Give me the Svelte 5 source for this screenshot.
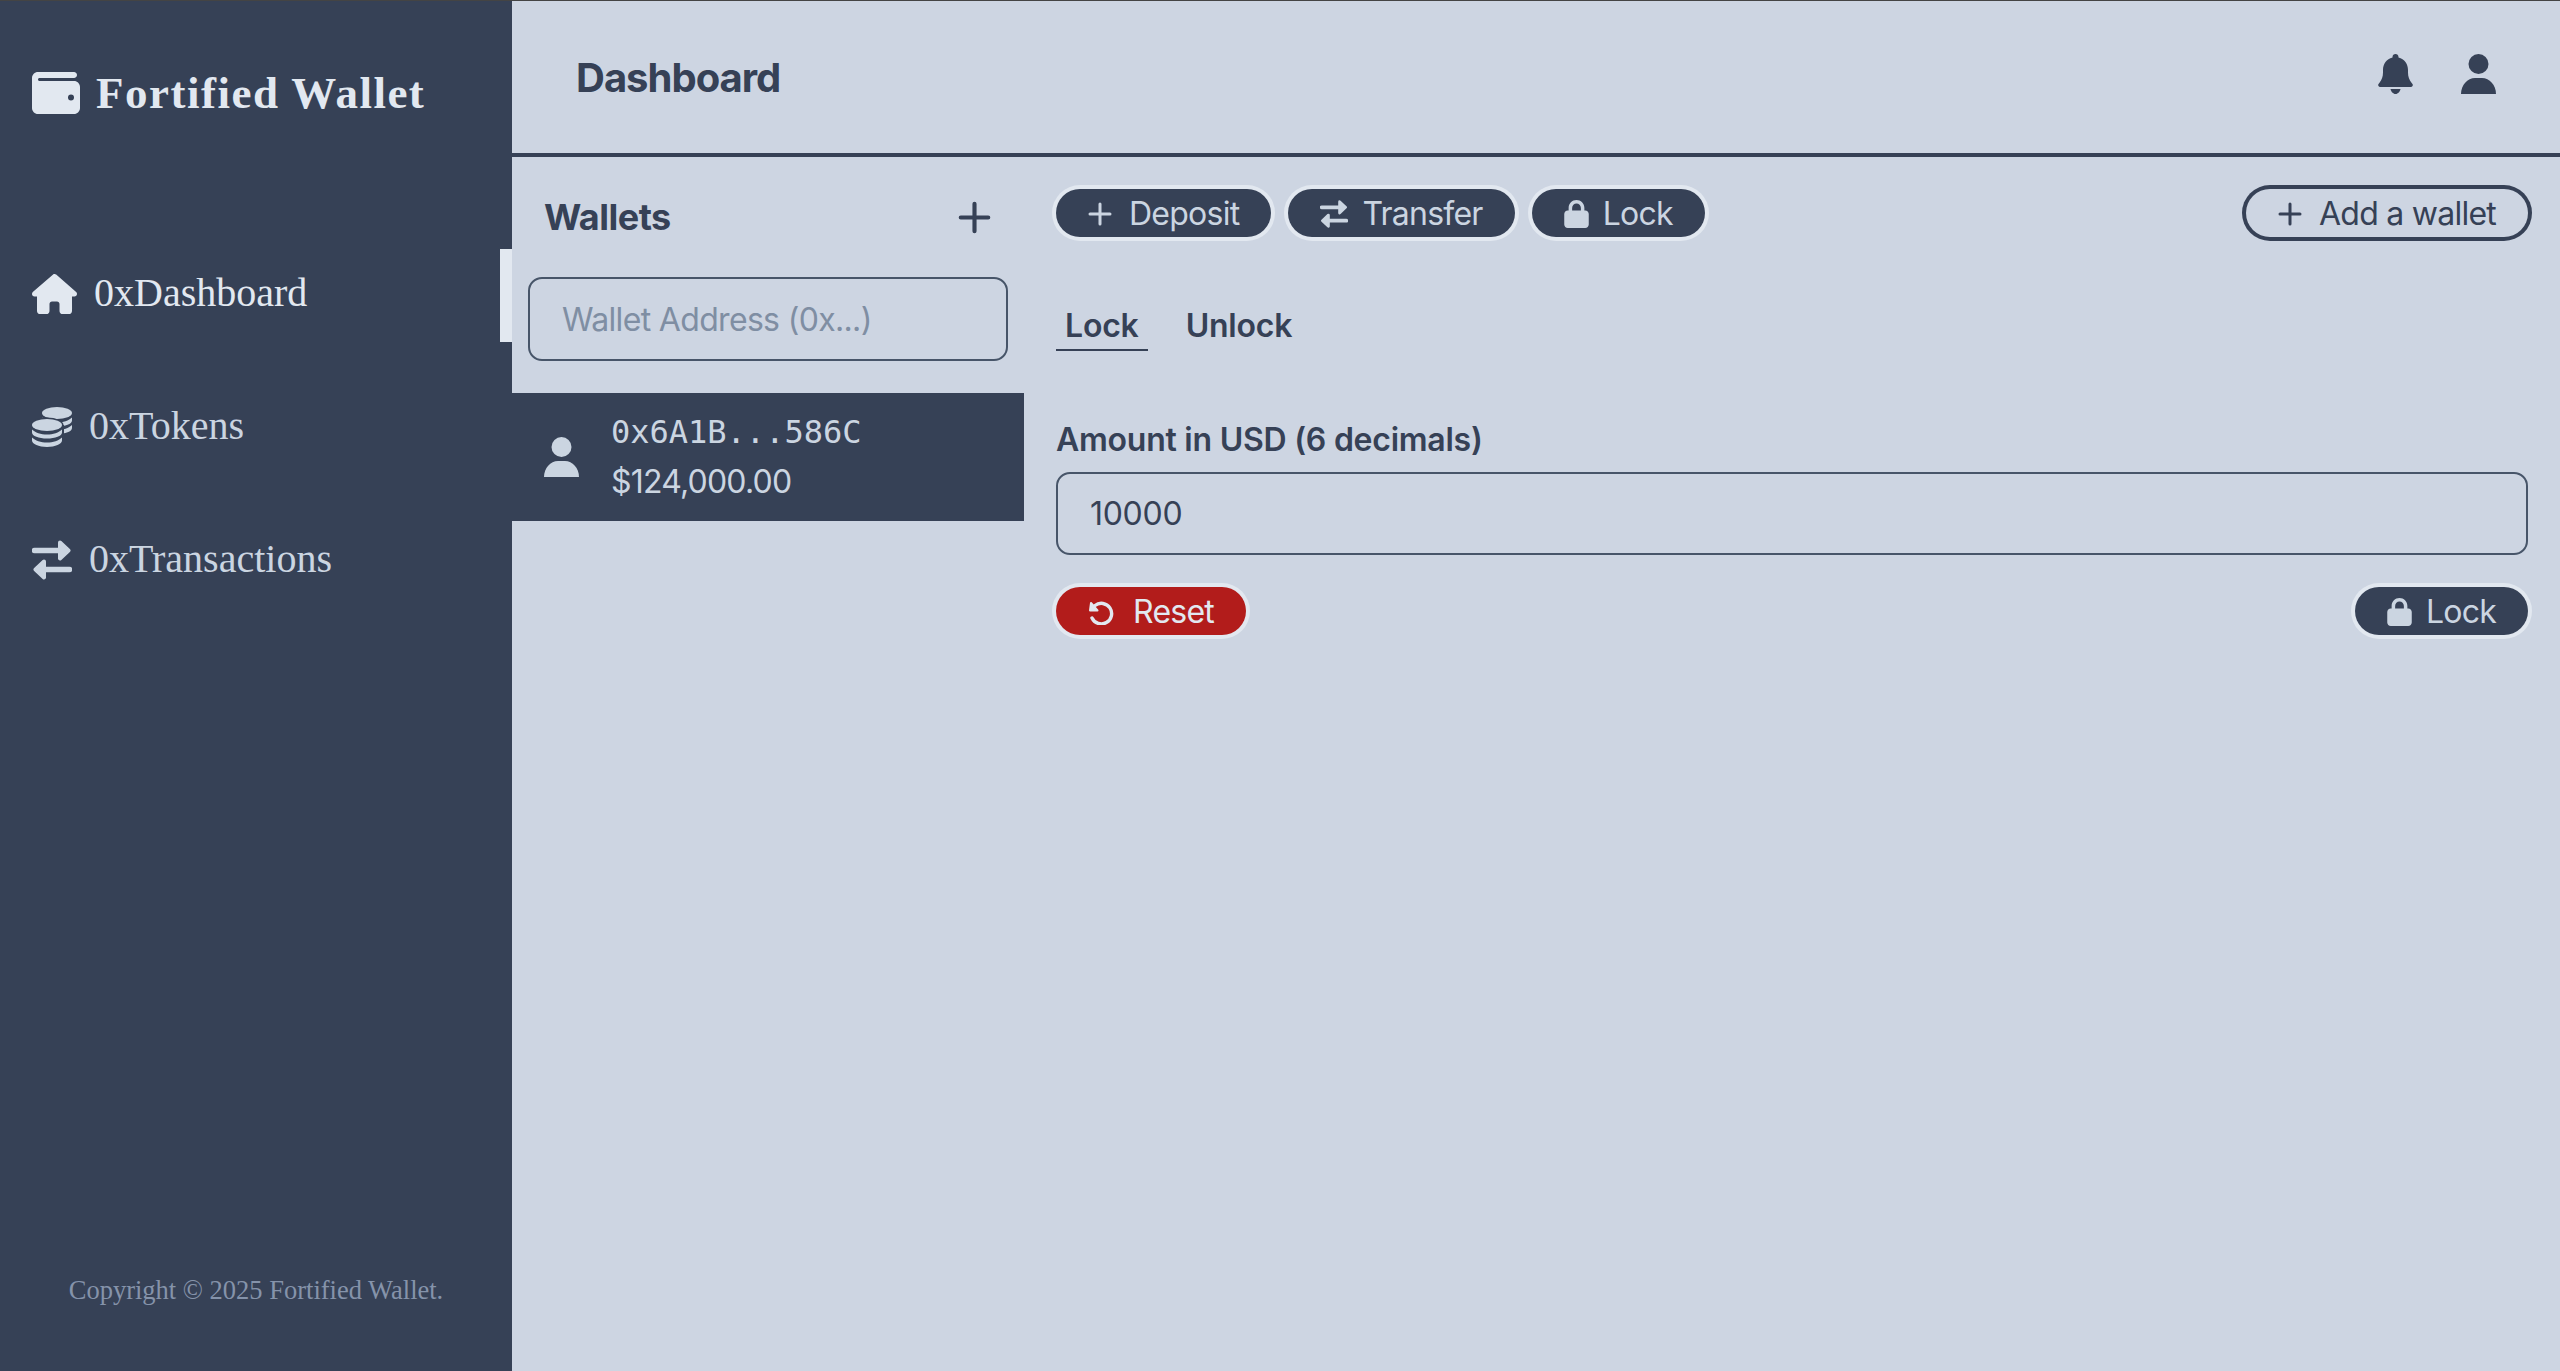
<script lang="ts">
  const nav = [
    { label: '0xDashboard', icon: 'home', active: true },
    { label: '0xTokens', icon: 'coins', active: false },
    { label: '0xTransactions', icon: 'arrows', active: false },
  ];

  let tab = $state('Lock');
  let amount = $state('10000');
  let address = $state('');
</script>

{#snippet plus(size: number)}
  <svg class="ico" width={size} height={size} viewBox="0 0 24 24" fill="none" stroke="currentColor" stroke-width="3" stroke-linecap="round">
    <path d="M12 2v20M2 12h20" />
  </svg>
{/snippet}

{#snippet arrows(size: number)}
  <svg class="ico" width={size} height={size} viewBox="0 0 40 40" fill="currentColor" stroke="currentColor">
    <path d="M2.5 10.5H28M37.5 29.5H12" fill="none" stroke-width="5.5" stroke-linecap="round" />
    <path d="M28 2.5l8.5 8-8.5 8zM12 21.5l-8.5 8 8.5 8z" stroke-width="4" stroke-linejoin="round" />
  </svg>
{/snippet}

{#snippet lock()}
  <svg class="ico" width="25" height="28" viewBox="0 0 448 512" fill="currentColor">
    <path d="M144 144v48H304V144c0-44.2-35.8-80-80-80s-80 35.8-80 80zM80 192V144C80 64.5 144.5 0 224 0s144 64.5 144 144v48h16c35.3 0 64 28.7 64 64V448c0 35.3-28.7 64-64 64H64c-35.3 0-64-28.7-64-64V256c0-35.3 28.7-64 64-64H80z" />
  </svg>
{/snippet}

{#snippet person()}
  <svg class="ico" width="35" height="40" viewBox="0 0 35 40" fill="currentColor">
    <circle cx="17.5" cy="10" r="10" />
    <path d="M0 40c0-9 6.5-16 14-16h7c7.5 0 14 7 14 16z" />
  </svg>
{/snippet}

<div class="app">
  <aside class="sidebar">
    <div class="brand">
      <svg class="ico" width="48" height="42" viewBox="0 32 512 448" fill="currentColor">
        <path d="M64 32C28.7 32 0 60.7 0 96V416c0 35.3 28.7 64 64 64H448c35.3 0 64-28.7 64-64V192c0-35.3-28.7-64-64-64H80c-8.8 0-16-7.2-16-16s7.2-16 16-16H448c17.7 0 32-14.3 32-32s-14.3-32-32-32H64zM416 272a32 32 0 1 1 0 64 32 32 0 1 1 0-64z" />
      </svg>
      <span>Fortified Wallet</span>
    </div>

    <nav class="nav">
      {#each nav as item}
        <div class="nav-item" class:active={item.active}>
          <div class="nav-icon">
            {#if item.icon === 'home'}
              <svg class="ico" width="45" height="40" viewBox="0 0 576 512" fill="currentColor">
                <path d="M575.8 255.5c0 18-15 32.1-32 32.1h-32l.7 160.2c0 2.7-.2 5.4-.5 8.1V472c0 22.1-17.9 40-40 40H456c-1.1 0-2.2 0-3.3-.1c-1.4 .1-2.8 .1-4.2 .1H416 392c-22.1 0-40-17.9-40-40V448 384c0-17.7-14.3-32-32-32H256c-17.7 0-32 14.3-32 32v64 24c0 22.1-17.9 40-40 40H160 128.1c-1.5 0-3-.1-4.5-.2c-1.2 .1-2.4 .2-3.6 .2H104c-22.1 0-40-17.9-40-40V360c0-.9 0-1.9 .1-2.8V287.6H32c-18 0-32-14-32-32.1c0-9 3-17 10-24L266.4 8c7-7 15-8 22-8s15 2 21 7L564.8 231.5c8 7 12 15 11 24z" />
              </svg>
            {:else if item.icon === 'coins'}
              <svg class="ico" width="40" height="40" viewBox="0 0 40 40" fill="currentColor">
                <ellipse cx="25" cy="6" rx="15" ry="6" />
                <path d="M10 10.5v3c0 3.5 6.7 6 15 6s15-2.5 15-6v-3c-3 3-9 5-15 5s-12-2-15-5z" />
                <path d="M10 18v3c0 3.5 6.7 6 15 6s15-2.5 15-6v-3c-3 3-9 5-15 5s-12-2-15-5z" />
                <ellipse cx="15" cy="18" rx="16.5" ry="7.5" fill="#364156" />
                <rect x="-2" y="18" width="34" height="23" fill="#364156" />
                <ellipse cx="15" cy="18" rx="15" ry="6" />
                <path d="M0 22.5v3c0 3.5 6.7 6 15 6s15-2.5 15-6v-3c-3 3-9 5-15 5s-12-2-15-5z" />
                <path d="M0 30.5v3c0 3.5 6.7 6.5 15 6.5s15-3 15-6.5v-3c-3 3-9 5-15 5s-12-2-15-5z" />
              </svg>
            {:else}
              {@render arrows(40)}
            {/if}
          </div>
          <span>{item.label}</span>
        </div>
      {/each}
    </nav>

    <p class="copyright">Copyright © 2025 Fortified Wallet.</p>
  </aside>

  <main class="main">
    <header class="topbar">
      <h1>Dashboard</h1>
      <div class="topbar-icons">
        <svg class="ico" width="35" height="40" viewBox="0 0 35 40" fill="currentColor">
          <path d="M17.5 0c1.7 0 3 1.3 3 3v.6C26.5 5 30 10 30 16v2.5c0 4 1.2 7.5 3.5 10.3l1 1.2c.8 1.2 0 3-1.5 3H2c-1.5 0-2.3-1.8-1.5-3l1-1.2C3.8 26 5 22.5 5 18.5V16C5 10 8.5 5 14.5 3.6V3c0-1.7 1.3-3 3-3z" />
          <path d="M12.5 35h10c-.5 2.5-2.5 5-5 5s-4.5-2.5-5-5z" />
        </svg>
        {@render person()}
      </div>
    </header>

    <div class="body">
      <section class="wallets">
        <div class="wallets-head">
          <h2>Wallets</h2>
          {@render plus(33)}
        </div>
        <input class="field wallet-field" type="text" placeholder="Wallet Address (0x...)" bind:value={address} />
        <div class="wallet-row">
          {@render person()}
          <div class="wallet-meta">
            <span class="addr">0x6A1B...586C</span>
            <span>$124,000.00</span>
          </div>
        </div>
      </section>

      <section class="content">
        <div class="toolbar">
          <button class="btn">{@render plus(24)}Deposit</button>
          <button class="btn btn-tight">{@render arrows(28)}Transfer</button>
          <button class="btn btn-tight">{@render lock()}Lock</button>
          <button class="btn btn-outline">{@render plus(24)}Add a wallet</button>
        </div>

        <div class="tabs">
          {#each ['Lock', 'Unlock'] as t}
            <button class="tab" class:selected={tab === t} onclick={() => (tab = t)}>{t}</button>
          {/each}
        </div>

        <label class="label" for="amount">Amount in USD (6 decimals)</label>
        <input id="amount" class="field" type="text" bind:value={amount} />

        <div class="actions">
          <button class="btn btn-danger">
            <svg class="ico" width="26" height="25" viewBox="0 0 26 25" fill="none" stroke="currentColor">
              <path d="M7 5.5A10.3 10.3 0 1 1 4 18" stroke-width="3.4" stroke-linecap="round" />
              <path d="M2 10.5h7.5L3 3z" fill="currentColor" stroke-width="2" stroke-linejoin="round" />
            </svg>
            Reset
          </button>
          <button class="btn btn-tight">{@render lock()}Lock</button>
        </div>
      </section>
    </div>
  </main>
</div>

<style>
  :global(body) {
    margin: 0;
    background: #cdd5e2;
  }

  .app {
    display: flex;
    height: 100vh;
    border-top: 1px solid #444;
    box-sizing: border-box;
    color: #364156;
    font-family: Inter, sans-serif;
    font-size: 32px;
    line-height: 48px;
    overflow: hidden;
  }

  .ico {
    display: block;
    flex-shrink: 0;
  }

  /* sidebar */
  .sidebar {
    width: 512px;
    flex-shrink: 0;
    display: flex;
    flex-direction: column;
    background: #364156;
    color: #cbd5e1;
    font-family: "Liberation Serif", serif;
  }

  .brand {
    height: 184px;
    padding-left: 32px;
    display: flex;
    align-items: center;
    gap: 16px;
    color: #e2e8f0;
    font-size: 45px;
    font-weight: 700;
    letter-spacing: 1.5px;
  }

  .nav {
    margin-top: 64px;
    display: flex;
    flex-direction: column;
    gap: 40px;
  }

  .nav-item {
    position: relative;
    height: 93px;
    padding-left: 32px;
    display: flex;
    align-items: center;
    gap: 17px;
    font-size: 40px;
  }

  .nav-icon {
    margin-bottom: 4px;
  }

  .nav-item span {
    margin-bottom: 6px;
  }

  .nav-item.active {
    color: #e2e8f0;
  }

  .nav-item.active::after {
    content: "";
    position: absolute;
    top: 0;
    right: 0;
    bottom: 0;
    width: 12px;
    background: #e2e8f0;
  }

  .copyright {
    margin: auto 0 57px;
    text-align: center;
    color: #8593aa;
    font-size: 26.5px;
  }

  /* main */
  .main {
    flex: 1;
    min-width: 0;
    display: flex;
    flex-direction: column;
  }

  .topbar {
    height: 152px;
    padding: 0 64px;
    display: flex;
    align-items: center;
    justify-content: space-between;
    border-bottom: 4px solid #364156;
  }

  .topbar h1 {
    margin: 2px 0 0;
    font-size: 40px;
    font-weight: 700;
    letter-spacing: -1px;
  }

  .topbar-icons {
    display: flex;
    gap: 48px;
    margin-bottom: 6px;
  }

  .body {
    flex: 1;
    display: flex;
  }

  .wallets {
    width: 512px;
    flex-shrink: 0;
  }

  .wallets-head {
    height: 120px;
    padding: 0 33px 0 32px;
    display: flex;
    align-items: center;
    justify-content: space-between;
  }

  .wallets-head h2 {
    margin: 0;
    font-size: 36px;
    font-weight: 700;
    letter-spacing: -0.5px;
  }

  .field {
    display: block;
    width: 100%;
    height: 83px;
    box-sizing: border-box;
    padding: 0 32px;
    border: 2px solid #475569;
    border-radius: 14px;
    background: transparent;
    color: #364156;
    font: inherit;
    letter-spacing: -0.3px;
    outline: none;
  }

  .field::placeholder {
    color: #7f8ea3;
    opacity: 1;
  }

  .wallet-field {
    width: 480px;
    height: 84px;
    margin-left: 16px;
    letter-spacing: -0.67px;
  }

  .wallet-row {
    margin-top: 32px;
    height: 128px;
    padding-left: 32px;
    box-sizing: border-box;
    display: flex;
    align-items: center;
    gap: 32px;
    background: #364156;
    color: #cbd5e1;
    letter-spacing: -0.8px;
  }

  .wallet-meta {
    display: flex;
    flex-direction: column;
    gap: 2px;
  }

  .addr {
    font-family: "DejaVu Sans Mono", monospace;
    letter-spacing: 0;
  }

  .content {
    flex: 1;
    min-width: 0;
    padding: 32px 32px 0;
  }

  .toolbar {
    display: flex;
    gap: 17px;
  }

  .btn {
    height: 48px;
    padding: 2px 32px 0;
    display: inline-flex;
    align-items: center;
    gap: 17px;
    border: 0;
    border-radius: 24px;
    background: #364156;
    box-shadow: 0 0 0 4px #e2e8f0;
    color: #cbd5e1;
    font: inherit;
    letter-spacing: -0.75px;
    white-space: nowrap;
  }

  .btn-tight {
    gap: 14px;
  }

  .btn-outline {
    margin-left: auto;
    background: transparent;
    box-shadow: 0 0 0 4px #364156;
    color: #364156;
  }

  .btn-danger {
    gap: 19px;
    background: #b21c1b;
    color: #e2e8f0;
  }

  .tabs {
    margin-top: 65px;
    display: flex;
    gap: 29px;
  }

  .tab {
    padding: 0 9px;
    height: 49px;
    border: 0;
    border-bottom: 2px solid transparent;
    background: none;
    color: #364156;
    font: inherit;
    font-weight: 600;
    letter-spacing: -0.2px;
  }

  .tab.selected {
    border-bottom-color: #364156;
  }

  .label {
    display: block;
    margin-top: 65px;
    margin-bottom: 8px;
    font-weight: 600;
    letter-spacing: -0.25px;
  }

  .actions {
    margin-top: 32px;
    display: flex;
    justify-content: space-between;
  }
</style>
